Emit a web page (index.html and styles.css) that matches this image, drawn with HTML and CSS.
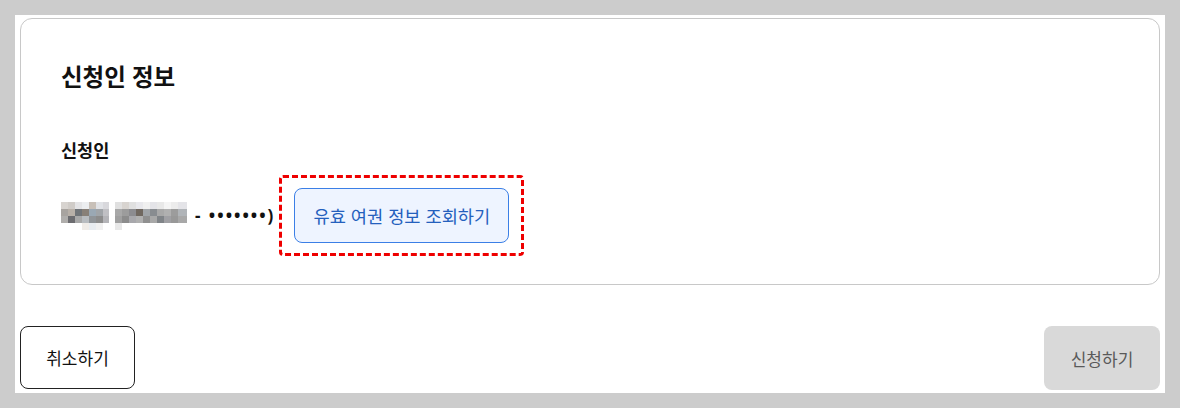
FILE: index.html
```html
<!DOCTYPE html>
<html lang="ko">
<head>
<meta charset="utf-8">
<title>신청인 정보</title>
<link rel="stylesheet" href="styles.css">
</head>
<body>
<div class="page">
  <section class="card">
    <h2 class="card-title">신청인 정보</h2>
    <div class="field-label">신청인</div>
    <div class="applicant-row">
      <svg class="mosaic" width="128" height="28" viewBox="0 0 128 28" aria-hidden="true">
        <g>
          <rect x="0" y="0" width="7" height="7" fill="#d8d4d0"/><rect x="7" y="0" width="7" height="7" fill="#d0ccc8"/><rect x="14" y="0" width="7" height="7" fill="#e4e4e6"/><rect x="21" y="0" width="7" height="7" fill="#eceef0"/><rect x="28" y="0" width="7" height="7" fill="#c8c0b8"/><rect x="35" y="0" width="7" height="7" fill="#e0e2e6"/><rect x="42" y="0" width="6" height="7" fill="#d8d8dc"/>
          <rect x="0" y="7" width="7" height="7" fill="#a8a4a0"/><rect x="7" y="7" width="7" height="7" fill="#b8b0a8"/><rect x="14" y="7" width="7" height="7" fill="#707478"/><rect x="21" y="7" width="7" height="7" fill="#888078"/><rect x="28" y="7" width="7" height="7" fill="#9aa8b4"/><rect x="35" y="7" width="7" height="7" fill="#a0a4a8"/><rect x="42" y="7" width="6" height="7" fill="#c0c0c4"/>
          <rect x="0" y="14" width="7" height="7" fill="#b0aeac"/><rect x="7" y="14" width="7" height="7" fill="#6c6c70"/><rect x="14" y="14" width="7" height="7" fill="#a8a8a8"/><rect x="21" y="14" width="7" height="7" fill="#b8bcc0"/><rect x="28" y="14" width="7" height="7" fill="#909498"/><rect x="35" y="14" width="7" height="7" fill="#8c8c8c"/><rect x="42" y="14" width="6" height="7" fill="#b4b4b8"/>
          <rect x="21" y="21" width="7" height="7" fill="#f0ece8"/><rect x="28" y="21" width="7" height="7" fill="#e8ecf0"/><rect x="35" y="21" width="7" height="7" fill="#f0f0f0"/>
        </g>
        <g transform="translate(54 0)">
          <rect x="0" y="0" width="7" height="7" fill="#e0e0e0"/><rect x="7" y="0" width="7" height="7" fill="#d8d4d0"/><rect x="14" y="0" width="7" height="7" fill="#e0e0e0"/><rect x="21" y="0" width="7" height="7" fill="#e8e8ec"/><rect x="28" y="0" width="7" height="7" fill="#f0f0f0"/><rect x="35" y="0" width="7" height="7" fill="#e4e4e8"/><rect x="42" y="0" width="7" height="7" fill="#e8e8e8"/><rect x="49" y="0" width="7" height="7" fill="#f4f4f4"/><rect x="56" y="0" width="7" height="7" fill="#ececec"/><rect x="63" y="0" width="9" height="7" fill="#e4e4e8"/>
          <rect x="0" y="7" width="7" height="7" fill="#a8a8a8"/><rect x="7" y="7" width="7" height="7" fill="#9c9c9c"/><rect x="14" y="7" width="7" height="7" fill="#8c8c90"/><rect x="21" y="7" width="7" height="7" fill="#706860"/><rect x="28" y="7" width="7" height="7" fill="#a0a4a8"/><rect x="35" y="7" width="7" height="7" fill="#888c90"/><rect x="42" y="7" width="7" height="7" fill="#a8a8a8"/><rect x="49" y="7" width="7" height="7" fill="#b0b0b0"/><rect x="56" y="7" width="7" height="7" fill="#9c9c9c"/><rect x="63" y="7" width="9" height="7" fill="#b0b4b8"/>
          <rect x="0" y="14" width="7" height="7" fill="#a0a0a0"/><rect x="7" y="14" width="7" height="7" fill="#8c8c8c"/><rect x="14" y="14" width="7" height="7" fill="#a8a8ac"/><rect x="21" y="14" width="7" height="7" fill="#b0b0b0"/><rect x="28" y="14" width="7" height="7" fill="#909090"/><rect x="35" y="14" width="7" height="7" fill="#a8a8a8"/><rect x="42" y="14" width="7" height="7" fill="#808488"/><rect x="49" y="14" width="7" height="7" fill="#a0a0a4"/><rect x="56" y="14" width="7" height="7" fill="#989898"/><rect x="63" y="14" width="9" height="7" fill="#a8a8a8"/>
          <rect x="0" y="21" width="7" height="7" fill="#e8e8e8"/>
        </g>
      </svg>
      <span class="masked-id">- •••••••)</span>
      <div class="highlight">
        <button class="btn-lookup" type="button">유효 여권 정보 조회하기</button>
      </div>
    </div>
  </section>
  <div class="actions">
    <button class="btn-cancel" type="button">취소하기</button>
    <button class="btn-submit" type="button" disabled>신청하기</button>
  </div>
</div>
</body>
</html>
```

FILE: styles.css
```css
* {
  box-sizing: border-box;
}

body {
  margin: 0;
  padding: 15px;
  background: #cccccc;
  font-family: "Noto Sans", "Noto Sans CJK KR", sans-serif;
  color: #111111;
}

.page {
  width: 1150px;
  height: 378px;
  background: #ffffff;
  padding: 3px 5px 0;
}

.card {
  height: 267px;
  border: 1px solid #c8c8c8;
  border-radius: 12px;
  padding: 42px 40px 27px;
}

.card-title {
  margin: 0;
  font-size: 23.5px;
  line-height: 33px;
  font-weight: 700;
  color: #111111;
}

.field-label {
  margin-top: 44px;
  font-size: 17.5px;
  line-height: 24px;
  font-weight: 700;
}

.applicant-row {
  margin-top: 13px;
  display: flex;
  align-items: center;
}

.mosaic {
  display: block;
  flex: none;
}

.masked-id {
  margin-left: 6px;
  font-size: 17px;
  font-weight: 700;
  letter-spacing: 2px;
  white-space: pre;
  color: #111111;
}

.highlight {
  margin-left: 4px;
  border: 3px dashed #ee0000;
  border-radius: 4px;
  padding: 10px 12px;
}

.btn-lookup {
  display: block;
  width: 215px;
  height: 55px;
  border: 1px solid #3b7fe6;
  border-radius: 8px;
  background: #eef4ff;
  color: #2460bd;
  font-family: "Noto Sans CJK KR", sans-serif;
  font-size: 17.6px;
  padding: 0;
  cursor: pointer;
}

.actions {
  margin-top: 41px;
  display: flex;
  justify-content: space-between;
  align-items: flex-start;
}

.btn-cancel {
  width: 115px;
  height: 63px;
  border: 1px solid #222222;
  border-radius: 8px;
  background: #ffffff;
  color: #111111;
  font-family: "Noto Sans CJK KR", sans-serif;
  font-size: 17px;
  padding: 0;
}

.btn-submit {
  width: 116px;
  height: 64px;
  border: none;
  border-radius: 8px;
  background: #d9d9d9;
  color: #5a5a5a;
  font-family: "Noto Sans CJK KR", sans-serif;
  font-size: 17px;
  padding: 0;
}
```
